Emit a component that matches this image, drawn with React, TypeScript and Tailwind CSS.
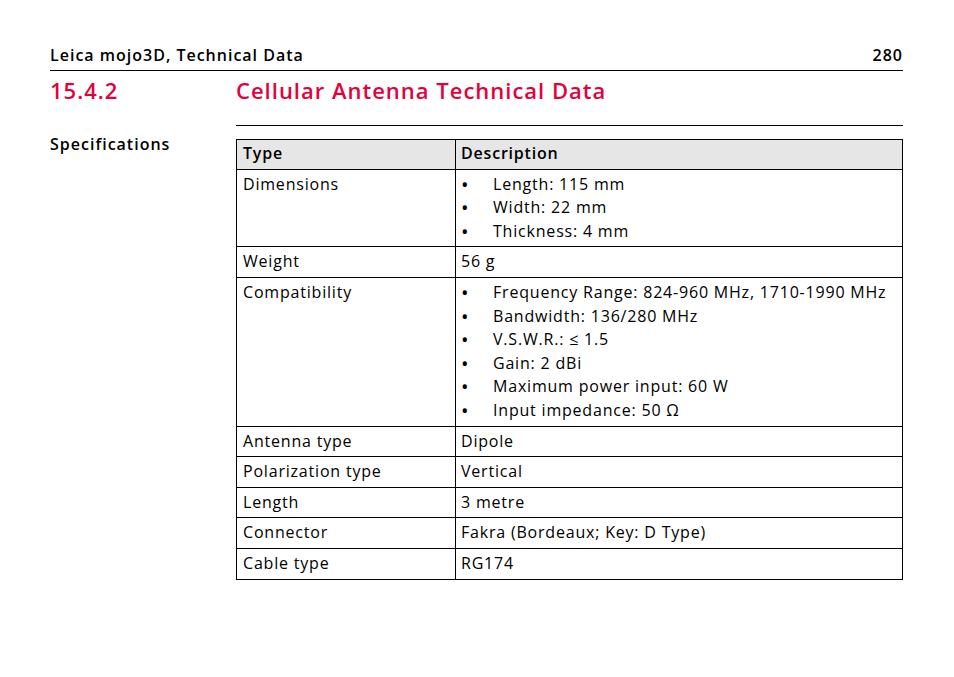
import React from "react";

const rows: [string, string[] | string][] = [
  ["Dimensions", ["Length: 115 mm", "Width: 22 mm", "Thickness: 4 mm"]],
  ["Weight", "56 g"],
  ["Compatibility", ["Frequency Range: 824-960 MHz, 1710-1990 MHz", "Bandwidth: 136/280 MHz", "V.S.W.R.: ≤ 1.5", "Gain: 2 dBi", "Maximum power input: 60 W", "Input impedance: 50 Ω"]],
  ["Antenna type", "Dipole"],
  ["Polarization type", "Vertical"],
  ["Length", "3 metre"],
  ["Connector", "Fakra (Bordeaux; Key: D Type)"],
  ["Cable type", "RG174"],
];

export default function App() {
  return (
    <div className="w-[954px] h-[677px] bg-white text-black pt-[44px] px-[50px] pr-[51px]" style={{ fontFamily: '"Open Sans", "DejaVu Sans", sans-serif' }}>
      <div className="flex justify-between items-end text-[16px] tracking-[1px] font-semibold leading-[22px] pb-[4px] border-b border-black">
        <span>Leica mojo3D, Technical Data</span>
        <span>280</span>
      </div>
      <div className="flex text-[#e4003b] text-[22px] tracking-[1px] font-semibold leading-[30px] mt-[4px]">
        <span className="w-[186px]">15.4.2</span>
        <span>Cellular Antenna Technical Data</span>
      </div>
      <div className="ml-[186px] mt-[20px] border-t border-black" />
      <div className="flex mt-[8px]">
        <div className="w-[186px] text-[16px] tracking-[1px] font-semibold leading-[22px] -mt-[1px]">Specifications</div>
        <table className="flex-1 border-collapse text-[16px] tracking-[0.8px] leading-[23.6px] mt-[5px]">
          <thead>
            <tr className="bg-[#e6e6e6] font-semibold">
              <td className="border border-black w-[219px] px-[6px] pt-[2px] pb-[3px]">Type</td>
              <td className="border border-black px-[5px] pt-[2px] pb-[3px]">Description</td>
            </tr>
          </thead>
          <tbody>
            {rows.map(([k, v]) => (
              <tr key={k}>
                <td className="border border-black align-top px-[6px] pt-[3px] pb-[3px]">{k}</td>
                <td className="border border-black align-top px-[5px] pt-[3px] pb-[3px]">
                  {Array.isArray(v)
                    ? v.map((t) => (
                        <div key={t} className="flex">
                          <span className="w-[32px] text-[20px] leading-[23.6px]">•</span>
                          <span>{t}</span>
                        </div>
                      ))
                    : v}
                </td>
              </tr>
            ))}
          </tbody>
        </table>
      </div>
    </div>
  );
}
